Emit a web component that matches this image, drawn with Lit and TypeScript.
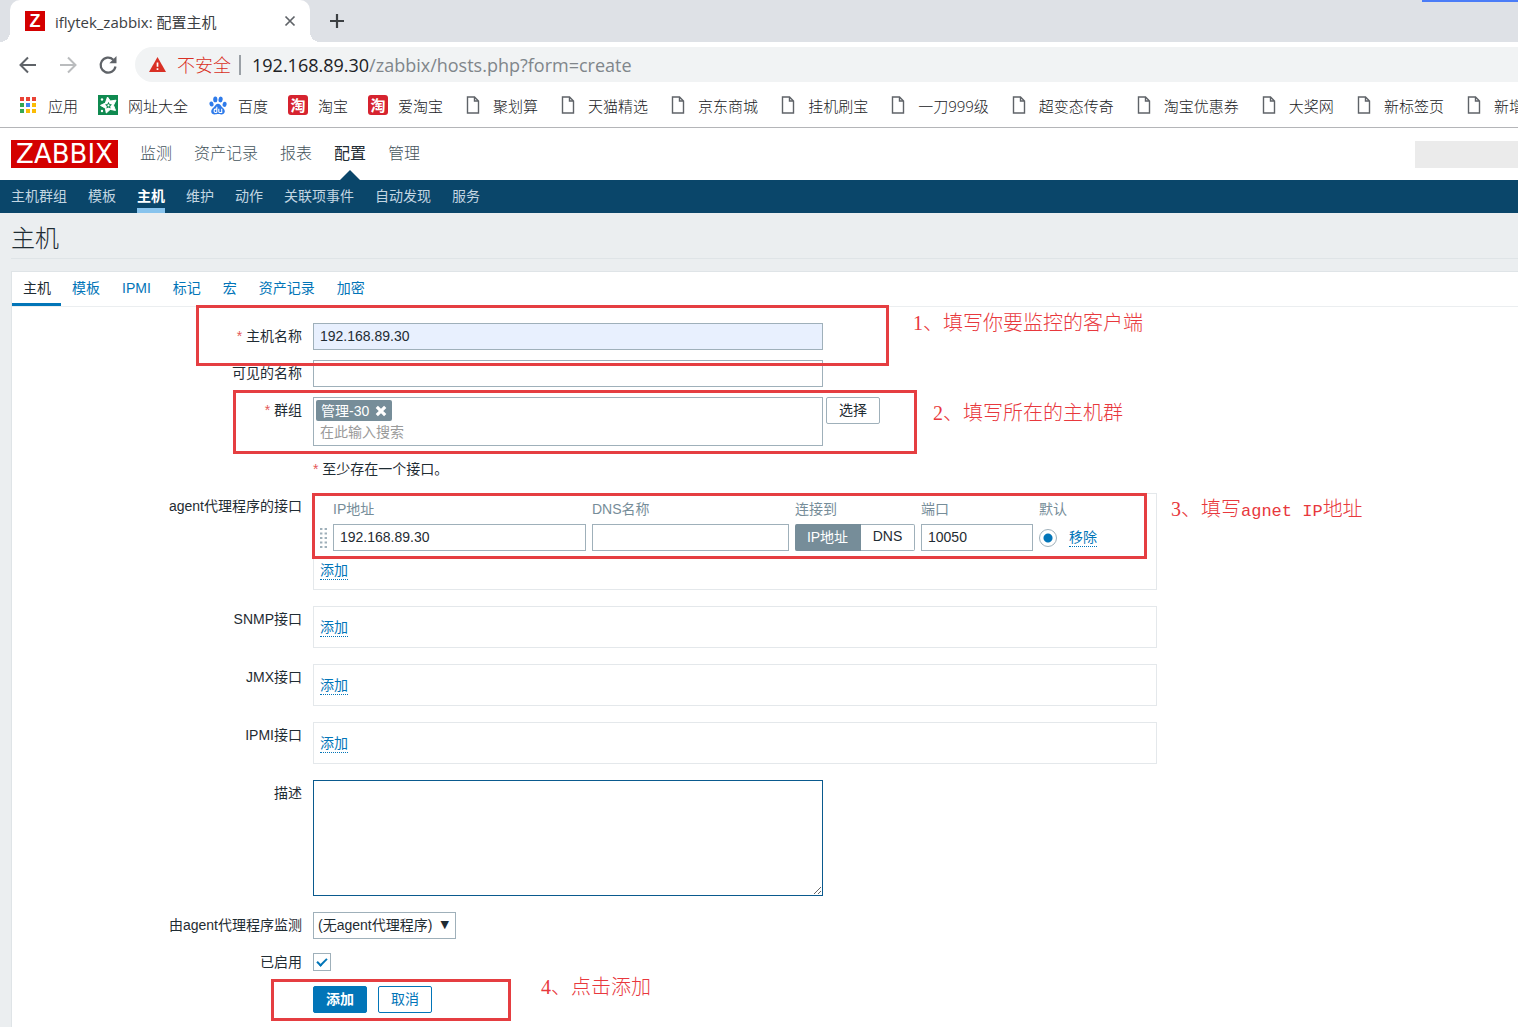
import { LitElement, html, css, svg, nothing, TemplateResult } from "lit";
import { customElement, state } from "lit/decorators.js";
import { classMap } from "lit/directives/class-map.js";

type BookmarkIcon = "apps" | "star" | "paw" | "tao" | "page";

interface Bookmark {
  icon: BookmarkIcon;
  title: string;
}

const BOOKMARKS: Bookmark[] = [
  { icon: "apps", title: "应用" },
  { icon: "star", title: "网址大全" },
  { icon: "paw", title: "百度" },
  { icon: "tao", title: "淘宝" },
  { icon: "tao", title: "爱淘宝" },
  { icon: "page", title: "聚划算" },
  { icon: "page", title: "天猫精选" },
  { icon: "page", title: "京东商城" },
  { icon: "page", title: "挂机刷宝" },
  { icon: "page", title: "一刀999级" },
  { icon: "page", title: "超变态传奇" },
  { icon: "page", title: "淘宝优惠券" },
  { icon: "page", title: "大奖网" },
  { icon: "page", title: "新标签页" },
  { icon: "page", title: "新增" },
];

const APP_COLORS = [
  "#ea4335", "#ea4335", "#ea4335",
  "#34a853", "#4285f4", "#fbbc05",
  "#34a853", "#fbbc05", "#fbbc05",
];

@customElement("browser-chrome")
export class BrowserChrome extends LitElement {
  static styles = css`
    :host {
      display: block;
      font-family: "Open Sans", "Noto Sans CJK SC", sans-serif;
      color: #3c4043;
      background: #fff;
    }
    .strip {
      position: relative;
      display: flex;
      height: 42px;
      padding-left: 10px;
      background: #dee1e6;
    }
    .accent {
      position: absolute;
      top: 0;
      right: 0;
      width: 96px;
      height: 2px;
      background: #4a7cf7;
    }
    .tab {
      position: relative;
      display: flex;
      align-items: center;
      width: 300px;
      box-sizing: border-box;
      padding: 0 13px 0 15px;
      border-radius: 10px 10px 0 0;
      background: #fff;
      font-size: 15px;
    }
    .tab::before,
    .tab::after {
      content: "";
      position: absolute;
      bottom: 0;
      width: 10px;
      height: 10px;
    }
    .tab::before {
      right: 100%;
      background: radial-gradient(circle at 0 0, #dee1e6 10px, #fff 10px);
    }
    .tab::after {
      left: 100%;
      background: radial-gradient(circle at 100% 0, #dee1e6 10px, #fff 10px);
    }
    .favicon {
      width: 20px;
      height: 20px;
      margin-right: 10px;
      background: #d40000;
      color: #fff;
      font: bold 18px/20px "Liberation Sans", sans-serif;
      text-align: center;
    }
    .tab-title {
      flex: 1;
      white-space: nowrap;
    }
    button {
      display: flex;
      align-items: center;
      justify-content: center;
      padding: 0;
      border: 0;
      background: none;
    }
    .close {
      width: 14px;
      height: 14px;
    }
    .plus {
      width: 34px;
      margin-left: 10px;
    }
    .toolbar {
      display: flex;
      align-items: center;
      height: 45px;
      padding-left: 16px;
    }
    .nav {
      width: 24px;
      height: 24px;
      margin-right: 16px;
    }
    .address {
      flex: 1;
      display: flex;
      align-items: center;
      height: 35px;
      margin-left: -1px;
      padding-left: 14px;
      border-radius: 18px 0 0 18px;
      background: #f1f3f4;
      font-size: 18px;
      line-height: 32px;
      white-space: nowrap;
    }
    .warn {
      margin-left: 11px;
      padding-right: 8px;
      color: #d93025;
      font-weight: 300;
    }
    .bar {
      width: 2px;
      height: 20px;
      margin-right: 11px;
      background: #9aa0a6;
    }
    .host {
      color: #202124;
    }
    .path {
      color: #80868b;
    }
    .bookmarks {
      display: flex;
      gap: 20px;
      height: 40px;
      padding: 0 0 0 18px;
      overflow: hidden;
      border-bottom: 1px solid #b4b5b8;
      font-size: 15px;
      font-weight: 300;
    }
    .bookmark {
      flex: none;
      display: flex;
      align-items: center;
      gap: 10px;
      padding-bottom: 4px;
      color: #202124;
      text-decoration: none;
      white-space: nowrap;
    }
    .icon {
      display: flex;
      justify-content: center;
      width: 20px;
    }
    .tao {
      width: 20px;
      height: 20px;
      border-radius: 3px;
      background: #d6232f;
      color: #fff;
      font: bold 15px/20px "Noto Sans CJK SC", sans-serif;
      text-align: center;
    }
  `;

  private icon(kind: BookmarkIcon): TemplateResult {
    switch (kind) {
      case "apps":
        return html`<svg width="18" height="18" viewBox="0 0 18 18" aria-hidden="true">
          ${APP_COLORS.map(
            (c, i) => svg`<rect x=${1 + (i % 3) * 6} y=${1 + Math.floor(i / 3) * 6} width="4" height="4" fill=${c} />`
          )}
        </svg>`;
      case "star":
        return html`<svg width="20" height="20" viewBox="0 0 20 20" aria-hidden="true">
          <rect width="20" height="20" fill="#0f8a50" />
          <path
            d="M9.500 2L12.300 6L18 5.200L15.500 10.200L17.500 15.400L12.200 14.400L8.300 18L7.400 13.200L2.500 10.400L7.400 8Z"
            fill="#fff"
            stroke="#fff"
            stroke-width="1"
            stroke-linejoin="round"
          />
          <path d="M10.500 6.800L11.600 9.100L14 9.500L12.200 11.200L12.600 13.500L10.500 12.400L8.400 13.500L8.800 11.200L7 9.500L9.400 9.100Z" fill="#0f8a50" />
          <circle cx="10.500" cy="10.400" r="1.100" fill="#fff" />
          <circle cx="4" cy="4.500" r="1.200" fill="#fff" />
          <circle cx="4" cy="16" r="1.200" fill="#fff" />
        </svg>`;
      case "paw":
        return html`<svg width="18" height="19" viewBox="0 0 18 19" aria-hidden="true">
          <g fill="#2f7bea">
            <ellipse cx="6.300" cy="3.400" rx="2.100" ry="2.900" />
            <ellipse cx="11.600" cy="3.500" rx="2.100" ry="2.900" transform="rotate(8 11.600 3.500)" />
            <ellipse cx="2.500" cy="8" rx="2" ry="2.600" transform="rotate(-14 2.500 8)" />
            <ellipse cx="15.600" cy="8.300" rx="2" ry="2.600" transform="rotate(12 15.600 8.300)" />
            <path d="M9 7.800c2 0 2.600 1.500 3.700 2.900 1.200 1.400 3.300 2.400 3.100 4.800-.2 2.300-2 3-3.600 2.900-1.300-.1-2-.4-3.200-.4s-2 .4-3.300.4c-1.800 0-3.400-.8-3.500-3-.1-2.200 1.900-3.200 3-4.600C6.400 9.300 7 7.800 9 7.800z" />
          </g>
          <g fill="none" stroke="#fff" stroke-width="1.100">
            <path d="M7.800 10.800v5.700M7.800 13.100H6.300c-1.500 0-1.600 3.400 0 3.400h1.500" />
            <path d="M9.800 12.700v2.900c0 .7.300.9.900.9h2v-3.800" />
          </g>
        </svg>`;
      case "tao":
        return html`<span class="tao">淘</span>`;
      default:
        return html`<svg width="14" height="18" viewBox="0 0 14 18" aria-hidden="true">
          <path d="M1.500 1H8.500L12.500 5V17H1.500ZM8.500 1V5H12.500" fill="none" stroke="#5f6368" stroke-width="1.400" />
        </svg>`;
    }
  }

  render() {
    return html`
      <div class="strip">
        <div class="tab">
          <span class="favicon">Z</span>
          <span class="tab-title">iflytek_zabbix: 配置主机</span>
          <button class="close" aria-label="关闭">
            <svg width="12" height="12" viewBox="0 0 12 12">
              <path d="M1.500 1.500L10.500 10.500M10.500 1.500L1.500 10.500" stroke="#5f6368" stroke-width="1.700" />
            </svg>
          </button>
        </div>
        <button class="plus" aria-label="新标签页">
          <svg width="16" height="16" viewBox="0 0 16 16">
            <path d="M8 1V15M1 8H15" stroke="#3c4043" stroke-width="2.200" />
          </svg>
        </button>
        <div class="accent"></div>
      </div>
      <div class="toolbar">
        <button class="nav" aria-label="后退">
          <svg width="18" height="18" viewBox="0 0 18 18" fill="none" stroke="#5f6368" stroke-width="2">
            <path d="M17 9H2M9 1.500L1.500 9L9 16.500" />
          </svg>
        </button>
        <button class="nav" aria-label="前进">
          <svg width="18" height="18" viewBox="0 0 18 18" fill="none" stroke="#babcbe" stroke-width="2">
            <path d="M1 9H16M9 1.500L16.500 9L9 16.500" />
          </svg>
        </button>
        <button class="nav" aria-label="重新加载">
          <svg width="20" height="20" viewBox="0 0 20 20">
            <path d="M17.500 11.500A7.500 7.500 0 1 1 15.300 4.700" fill="none" stroke="#5f6368" stroke-width="2.200" />
            <path d="M18.500 1V8.200H11.300Z" fill="#5f6368" />
          </svg>
        </button>
        <div class="address">
          <svg width="17" height="15" viewBox="0 0 17 15" aria-hidden="true">
            <path d="M8.500 0L17 15H0Z" fill="#d93025" />
            <path d="M8.500 5.500V9.800M8.500 11.200V13" stroke="#fff" stroke-width="1.700" />
          </svg>
          <span class="warn">不安全</span>
          <span class="bar"></span>
          <span class="host">192.168.89.30</span><span class="path">/zabbix/hosts.php?form=create</span>
        </div>
      </div>
      <nav class="bookmarks" aria-label="书签">
        ${BOOKMARKS.map(
          (b) => html`<a class="bookmark" href="#"><span class="icon">${this.icon(b.icon)}</span>${b.title}</a>`
        )}
      </nav>
    `;
  }
}

const MAIN_MENU = ["监测", "资产记录", "报表", "配置", "管理"];
const SUB_MENU = ["主机群组", "模板", "主机", "维护", "动作", "关联项事件", "自动发现", "服务"];
const FORM_TABS = ["主机", "模板", "IPMI", "标记", "宏", "资产记录", "加密"];
const EMPTY_INTERFACES = ["SNMP接口", "JMX接口", "IPMI接口"];

@customElement("app-root")
export class AppRoot extends LitElement {
  static styles = css`
    :host {
      display: flex;
      flex-direction: column;
      min-height: 100vh;
      overflow: hidden;
      background: #ebeef0;
      color: #1f2c33;
      font-family: "Liberation Sans", "Noto Sans CJK SC", sans-serif;
      font-size: 14px;
    }
    a {
      color: #0275b8;
      text-decoration: none;
    }
    input,
    select,
    textarea,
    button {
      box-sizing: border-box;
      margin: 0;
      font: inherit;
      color: inherit;
    }
    .top {
      display: flex;
      align-items: center;
      height: 52px;
      padding-left: 11px;
      background: #fff;
    }
    .logo {
      width: 107px;
      height: 28px;
      margin-right: 22px;
      background: #d40000;
      color: #fff;
      font: 26px/28px "DejaVu Sans", sans-serif;
      text-align: center;
    }
    .menu {
      flex: 1;
      display: flex;
      align-self: stretch;
      gap: 22px;
      font-size: 16px;
      font-weight: 300;
      line-height: 52px;
    }
    .menu a {
      position: relative;
      color: #45545c;
    }
    .menu .current {
      color: #1f2c33;
      font-weight: normal;
    }
    .menu .current::after {
      content: "";
      position: absolute;
      bottom: 0;
      left: 50%;
      margin-left: -10px;
      border: 10px solid transparent;
      border-top: 0;
      border-bottom-color: #0a466a;
    }
    .masked {
      width: 103px;
      height: 27px;
      background: #ebebeb;
    }
    .sub {
      display: flex;
      gap: 21px;
      height: 33px;
      padding-left: 11px;
      background: #0a466a;
      line-height: 32px;
    }
    .sub a {
      box-sizing: border-box;
      color: #c3d6e2;
    }
    .sub .current {
      border-bottom: 5px solid #87c3ed;
      color: #fff;
      font-weight: bold;
    }
    h1 {
      margin: 0 0 13px 11px;
      height: 45px;
      border-bottom: 1px solid #dfe4e7;
      font-size: 24px;
      font-weight: 300;
      line-height: 51px;
    }
    .panel {
      flex: 1;
      margin-top: -1px;
      margin-left: 11px;
      border: 1px solid #dfe4e7;
      border-width: 1px 0 0 1px;
      background: #fff;
    }
    .tabs {
      display: flex;
      height: 34px;
      border-bottom: 1px solid #ebeef0;
      line-height: 32px;
    }
    .tabs a {
      box-sizing: border-box;
      padding: 0 11px;
    }
    .tabs .current {
      padding-right: 10px;
      border-bottom: 3px solid #0275b8;
      color: #1f2c33;
    }
    form {
      position: relative;
      display: flex;
      flex-direction: column;
      gap: 10px;
      padding: 16px 0 14px;
    }
    .row {
      display: grid;
      grid-template-columns: 290px minmax(0, 1fr);
      column-gap: 11px;
    }
    .spaced {
      margin-bottom: 6px;
    }
    .label {
      line-height: 27px;
      text-align: right;
    }
    .required::before {
      content: "* ";
      color: #e45959;
    }
    .field {
      display: flex;
      align-items: flex-start;
      gap: 3px;
    }
    .text {
      width: 510px;
      height: 27px;
      padding: 0 6px 2px;
      border: 1px solid #9fb0ba;
      border-radius: 0;
      outline: 0;
      background: #fff;
    }
    .filled {
      background: #e8f0fe;
    }
    .cell-text {
      display: block;
      width: 100%;
    }
    .groups {
      box-sizing: border-box;
      width: 510px;
      height: 49px;
      padding: 2px;
      border: 1px solid #9fb0ba;
    }
    .chip {
      box-sizing: border-box;
      display: inline-flex;
      align-items: center;
      gap: 6px;
      height: 21px;
      padding: 0 5px;
      border-radius: 2px;
      background: #768d99;
      color: #fff;
      line-height: 16px;
      vertical-align: top;
    }
    .chip button {
      display: flex;
      padding: 0;
      border: 0;
      background: none;
    }
    .group-search {
      display: block;
      width: 100%;
      height: 22px;
      padding: 0 4px;
      border: 0;
      outline: 0;
    }
    .group-search::placeholder {
      color: #9a9a9a;
    }
    .btn {
      width: 54px;
      height: 27px;
      padding: 0 0 4px;
      border: 1px solid #9fb0ba;
      border-radius: 2px;
      background: #fff;
    }
    .primary {
      border-color: #0275b8;
      background: #0275b8;
      color: #fff;
      font-weight: bold;
    }
    .outline {
      margin-left: 8px;
      border-color: #0275b8;
      color: #0275b8;
    }
    .note {
      line-height: 27px;
    }
    .box {
      box-sizing: border-box;
      width: 844px;
      min-height: 42px;
      border: 1px solid #e4e8eb;
    }
    .interfaces {
      padding-bottom: 9px;
    }
    .box > .dotted {
      margin: 0 0 0 6px;
    }
    .dotted {
      padding: 0;
      border: 0;
      border-bottom: 1px dotted #0275b8;
      background: none;
      color: #0275b8;
      line-height: 18px;
    }
    .empty {
      display: flex;
      align-items: center;
    }
    table {
      width: 100%;
      margin-bottom: 10px;
      border-collapse: collapse;
      table-layout: fixed;
    }
    th,
    td {
      padding: 0 6px 0 0;
      text-align: left;
    }
    th {
      height: 28px;
      padding-bottom: 2px;
      color: #768d99;
      font-weight: normal;
    }
    .c-drag {
      width: 19px;
    }
    .c-ip {
      width: 259px;
    }
    .c-dns {
      width: 203px;
    }
    .c-mode {
      width: 126px;
    }
    .c-port {
      width: 118px;
    }
    .c-default {
      width: 30px;
    }
    .drag {
      padding-left: 6px;
    }
    .drag svg {
      display: block;
    }
    .modes {
      display: flex;
    }
    .mode {
      height: 27px;
      flex: 1;
      padding: 0 0 3px;
      border: 1px solid #9fb0ba;
      border-left: 0;
      border-radius: 0 2px 2px 0;
      background: #fff;
    }
    .mode.on {
      flex: 0 0 66px;
      border-color: #768d99;
      border-radius: 2px 0 0 2px;
      background: #768d99;
      color: #fff;
    }
    .radio {
      display: block;
      appearance: none;
      width: 18px;
      height: 18px;
      border: 1px solid #9fb0ba;
      border-radius: 50%;
      background: #fff;
    }
    .radio:checked {
      background: radial-gradient(circle, #0275b8 4px, #fff 5px);
    }
    textarea {
      width: 510px;
      height: 116px;
      border: 1px solid #0a5a8e;
      outline: 0;
      background: #fff;
    }
    .select-wrap {
      position: relative;
      display: block;
    }
    .select-wrap::after {
      content: "▼";
      position: absolute;
      top: 0;
      right: 7px;
      font: 11px/26px "DejaVu Sans", sans-serif;
      pointer-events: none;
    }
    select {
      display: block;
      appearance: none;
      width: 143px;
      height: 27px;
      padding: 0 4px 1px;
      border: 1px solid #9fb0ba;
      border-radius: 0;
      background: #fff;
    }
    .check {
      appearance: none;
      width: 18px;
      height: 18px;
      margin-top: 4px;
      border: 1px solid #9fb0ba;
      background: #fff;
    }
    .check:checked::before {
      content: "";
      display: block;
      width: 8px;
      height: 4px;
      margin: 4px 0 0 3px;
      border: solid #0275b8;
      border-width: 0 0 2px 2px;
      transform: rotate(-45deg);
    }
    .frame {
      position: absolute;
      box-sizing: border-box;
      border: 3px solid #e53e41;
      pointer-events: none;
    }
    .step {
      position: absolute;
      color: #e8383d;
      font: 20px/24px "Liberation Serif", "Noto Sans CJK SC", serif;
      font-weight: 300;
      white-space: nowrap;
    }
    .mono {
      font-family: "Liberation Mono", monospace;
      font-size: 17px;
    }
    .frame-name {
      left: 184px;
      top: -2px;
      width: 693px;
      height: 61px;
    }
    .frame-group {
      left: 221px;
      top: 83px;
      width: 684px;
      height: 64px;
    }
    .frame-agent {
      left: 300px;
      top: 186px;
      width: 835px;
      height: 66px;
    }
    .frame-submit {
      left: 259px;
      top: 672px;
      width: 240px;
      height: 42px;
    }
    .step-name {
      left: 901px;
      top: 4px;
    }
    .step-group {
      left: 921px;
      top: 94px;
    }
    .step-agent {
      left: 1159px;
      top: 190px;
    }
    .step-submit {
      left: 529px;
      top: 668px;
    }
  `;

  @state() private mode: "ip" | "dns" = "ip";

  private links(items: string[], current: string) {
    return items.map(
      (t) => html`<a
        href="#"
        class=${classMap({ current: t === current })}
        aria-current=${t === current ? "page" : nothing}
        >${t}</a
      >`
    );
  }

  private agentInterfaces() {
    return html`
      <div class="row spaced" role="group" aria-labelledby="agent-label">
        <span class="label" id="agent-label">agent代理程序的接口</span>
        <div class="box interfaces">
          <table>
            <colgroup>
              <col class="c-drag" />
              <col class="c-ip" />
              <col class="c-dns" />
              <col class="c-mode" />
              <col class="c-port" />
              <col class="c-default" />
              <col />
            </colgroup>
            <thead>
              <tr>
                <th></th>
                <th>IP地址</th>
                <th>DNS名称</th>
                <th>连接到</th>
                <th>端口</th>
                <th colspan="2">默认</th>
              </tr>
            </thead>
            <tbody>
              <tr>
                <td class="drag">
                  <svg width="8" height="22" viewBox="0 0 8 22" fill="#9fb0ba" aria-hidden="true">
                    ${[0, 1, 2, 3, 4].map(
                      (i) => svg`<rect x="0" y=${1 + i * 4.5} width="2.400" height="2" /><rect x="4.600" y=${1 + i * 4.5} width="2.400" height="2" />`
                    )}
                  </svg>
                </td>
                <td><input class="text cell-text" type="text" aria-label="IP地址" value="192.168.89.30" /></td>
                <td><input class="text cell-text" type="text" aria-label="DNS名称" /></td>
                <td>
                  <div class="modes">
                    <button
                      type="button"
                      class=${classMap({ mode: true, on: this.mode === "ip" })}
                      @click=${() => (this.mode = "ip")}
                    >IP地址</button>
                    <button
                      type="button"
                      class=${classMap({ mode: true, on: this.mode === "dns" })}
                      @click=${() => (this.mode = "dns")}
                    >DNS</button>
                  </div>
                </td>
                <td><input class="text cell-text" type="text" aria-label="端口" value="10050" /></td>
                <td><input class="radio" type="radio" name="main" aria-label="默认" checked /></td>
                <td><button type="button" class="dotted">移除</button></td>
              </tr>
            </tbody>
          </table>
          <button type="button" class="dotted">添加</button>
        </div>
      </div>
    `;
  }

  render() {
    return html`
      <browser-chrome></browser-chrome>
      <header>
        <div class="top">
          <div class="logo">ZABBIX</div>
          <nav class="menu">${this.links(MAIN_MENU, "配置")}</nav>
          <div class="masked"></div>
        </div>
        <nav class="sub">${this.links(SUB_MENU, "主机")}</nav>
      </header>
      <h1>主机</h1>
      <main class="panel">
        <nav class="tabs">${this.links(FORM_TABS, "主机")}</nav>
        <form @submit=${(e: Event) => e.preventDefault()}>
          <div class="row">
            <label class="label required" for="host">主机名称</label>
            <div class="field"><input class="text filled" id="host" type="text" value="192.168.89.30" /></div>
          </div>
          <div class="row">
            <label class="label" for="visible">可见的名称</label>
            <div class="field"><input class="text" id="visible" type="text" /></div>
          </div>
          <div class="row">
            <label class="label required" for="groups">群组</label>
            <div class="field">
              <div class="groups">
                <span class="chip">管理-30
                  <button type="button" aria-label="移除 管理-30">
                    <svg width="12" height="12" viewBox="0 0 12 12">
                      <path d="M1.800 1.800L10.200 10.200M10.200 1.800L1.800 10.200" stroke="#fff" stroke-width="3.200" />
                    </svg>
                  </button>
                </span>
                <input class="group-search" id="groups" type="text" placeholder="在此输入搜索" />
              </div>
              <button type="button" class="btn">选择</button>
            </div>
          </div>
          <div class="row">
            <span></span>
            <span class="note required">至少存在一个接口。</span>
          </div>
          ${this.agentInterfaces()}
          ${EMPTY_INTERFACES.map(
            (name) => html`<div class="row spaced">
              <span class="label">${name}</span>
              <div class="box empty"><button type="button" class="dotted">添加</button></div>
            </div>`
          )}
          <div class="row spaced">
            <label class="label" for="description">描述</label>
            <div class="field"><textarea id="description"></textarea></div>
          </div>
          <div class="row">
            <label class="label" for="proxy">由agent代理程序监测</label>
            <div class="field">
              <span class="select-wrap">
                <select id="proxy">
                  <option>(无agent代理程序)</option>
                </select>
              </span>
            </div>
          </div>
          <div class="row">
            <label class="label" for="enabled">已启用</label>
            <div class="field"><input class="check" id="enabled" type="checkbox" checked /></div>
          </div>
          <div class="row">
            <span></span>
            <div class="field">
              <button class="btn primary">添加</button>
              <button type="button" class="btn outline">取消</button>
            </div>
          </div>

          <div class="frame frame-name"></div>
          <div class="frame frame-group"></div>
          <div class="frame frame-agent"></div>
          <div class="frame frame-submit"></div>
          <span class="step step-name">1、填写你要监控的客户端</span>
          <span class="step step-group">2、填写所在的主机群</span>
          <span class="step step-agent">3、填写<span class="mono">agnet IP</span>地址</span>
          <span class="step step-submit">4、点击添加</span>
        </form>
      </main>
    `;
  }
}
